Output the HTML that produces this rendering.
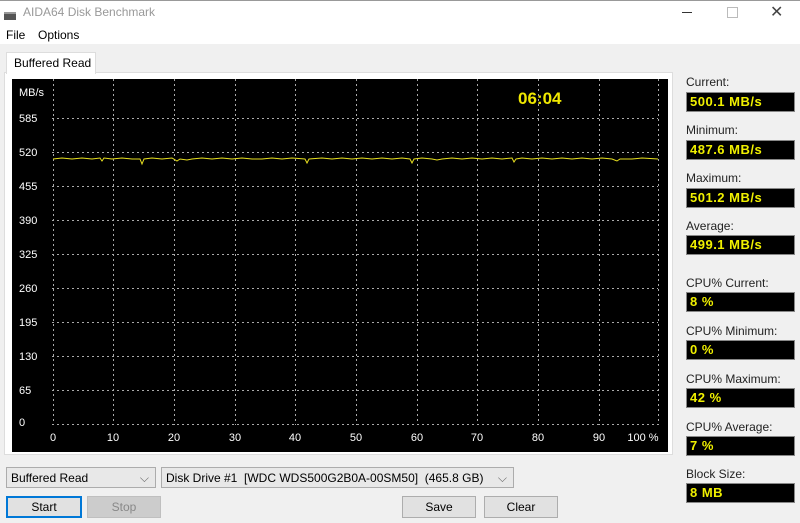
<!DOCTYPE html>
<html><head><style>
body{margin:0;width:800px;height:523px;background:#f0f0f0;font-family:"Liberation Sans",sans-serif;font-size:12px;color:#000;position:relative;overflow:hidden}
.a{position:absolute}
.lbl{position:absolute;left:686px;font-size:12px;color:#222}
.box{position:absolute;left:686px;width:104px;height:18px;background:#000;border:1px solid #888;color:#f0f000;font-weight:bold;font-size:13px;line-height:18px;padding-left:3px;box-sizing:content-box;letter-spacing:0.5px}
.btn{position:absolute;height:20px;border:1px solid #adadad;background:#e1e1e1;text-align:center;line-height:20px;font-size:12px}
.sel{position:absolute;height:21px;border:1px solid #acacac;background:#e8e8e8;line-height:21px;font-size:12px;padding-left:4px;box-sizing:border-box}
</style></head><body>
<div class="a" style="left:0;top:0;width:800px;height:44px;background:#fff;border-top:1px solid #999;box-sizing:border-box"></div>
<div class="a" style="left:4px;top:12px;width:12px;height:6px;background:#555;border-top:2px solid #999"></div>
<div class="a" style="left:23px;top:5px;color:#999;font-size:12px">AIDA64 Disk Benchmark</div>
<div class="a" style="left:682px;top:12px;width:10px;height:1px;background:#333"></div>
<div class="a" style="left:727px;top:7px;width:9px;height:9px;border:1px solid #bbb"></div>
<div class="a" style="left:770px;top:2px;font-size:16px;color:#444">✕</div>
<div class="a" style="left:6px;top:28px">File</div>
<div class="a" style="left:38px;top:28px">Options</div>
<div class="a" style="left:4px;top:72px;width:669px;height:383px;background:#fff;border:1px solid #ddd;box-sizing:border-box"></div>
<div class="a" style="left:6px;top:52px;width:88px;height:21px;background:#fff;border:1px solid #ddd;border-bottom:none"></div>
<div class="a" style="left:14px;top:56px">Buffered Read</div>
<svg class="a" style="left:12px;top:79px" width="656" height="373">
<rect width="656" height="373" fill="#000"/>
<g stroke="#aaa" stroke-dasharray="2,3" stroke-width="1">
<line x1="40" x2="646" y1="39.5" y2="39.5"/><line x1="40" x2="646" y1="73.5" y2="73.5"/><line x1="40" x2="646" y1="107.5" y2="107.5"/><line x1="40" x2="646" y1="141.5" y2="141.5"/><line x1="40" x2="646" y1="175.5" y2="175.5"/><line x1="40" x2="646" y1="209.5" y2="209.5"/><line x1="40" x2="646" y1="243.5" y2="243.5"/><line x1="40" x2="646" y1="277.5" y2="277.5"/><line x1="40" x2="646" y1="311.5" y2="311.5"/><line x1="40" x2="646" y1="345.5" y2="345.5"/>
<line y1="0" y2="346" x1="41.5" x2="41.5"/><line y1="0" y2="346" x1="101.5" x2="101.5"/><line y1="0" y2="346" x1="162.5" x2="162.5"/><line y1="0" y2="346" x1="223.5" x2="223.5"/><line y1="0" y2="346" x1="283.5" x2="283.5"/><line y1="0" y2="346" x1="344.5" x2="344.5"/><line y1="0" y2="346" x1="405.5" x2="405.5"/><line y1="0" y2="346" x1="465.5" x2="465.5"/><line y1="0" y2="346" x1="526.5" x2="526.5"/><line y1="0" y2="346" x1="587.5" x2="587.5"/><line y1="0" y2="346" x1="646.5" x2="646.5"/>
</g>
<polyline fill="none" stroke="#e8e020" stroke-width="1" points="41,80 50,79 60,80 70,79 80,80 88,79 90,82 92,79 100,80 110,79 120,80 128,80 130,85 132,80 140,79 150,80 160,79 165,82 168,80 175,81 180,80 190,79 200,80 210,79 220,80 230,79 240,80 250,80 260,79 270,80 280,79 293,80 295,84 297,80 310,79 320,80 330,79 340,80 350,79 360,80 370,79 380,80 390,79 398,80 400,84 402,80 410,79 420,80 425,81 430,80 440,79 450,80 460,79 470,80 480,79 490,80 500,79 502,83 504,80 510,79 520,80 530,79 540,80 550,79 560,80 570,79 580,80 590,79 600,80 605,82 608,80 620,80 630,79 646,80"/>
<g fill="#fff" font-family="Liberation Sans" font-size="11">
<text x="7" y="17">MB/s</text><text x="7" y="43">585</text><text x="7" y="77">520</text><text x="7" y="111">455</text><text x="7" y="145">390</text><text x="7" y="179">325</text><text x="7" y="213">260</text><text x="7" y="247">195</text><text x="7" y="281">130</text><text x="7" y="315">65</text><text x="7" y="347">0</text>
<g text-anchor="middle"><text x="41" y="362">0</text><text x="101" y="362">10</text><text x="162" y="362">20</text><text x="223" y="362">30</text><text x="283" y="362">40</text><text x="344" y="362">50</text><text x="405" y="362">60</text><text x="465" y="362">70</text><text x="526" y="362">80</text><text x="587" y="362">90</text><text x="631" y="362">100 %</text></g>
</g>
<text x="506" y="25" fill="#f0e800" font-family="Liberation Sans" font-weight="bold" font-size="17">06:04</text>
</svg>
<div class="lbl" style="top:75px">Current:</div><div class="box" style="top:92px">500.1 MB/s</div>
<div class="lbl" style="top:123px">Minimum:</div><div class="box" style="top:140px">487.6 MB/s</div>
<div class="lbl" style="top:171px">Maximum:</div><div class="box" style="top:188px">501.2 MB/s</div>
<div class="lbl" style="top:219px">Average:</div><div class="box" style="top:235px">499.1 MB/s</div>
<div class="lbl" style="top:276px">CPU% Current:</div><div class="box" style="top:292px">8 %</div>
<div class="lbl" style="top:324px">CPU% Minimum:</div><div class="box" style="top:340px">0 %</div>
<div class="lbl" style="top:372px">CPU% Maximum:</div><div class="box" style="top:388px">42 %</div>
<div class="lbl" style="top:420px">CPU% Average:</div><div class="box" style="top:436px">7 %</div>
<div class="lbl" style="top:467px">Block Size:</div><div class="box" style="top:483px">8 MB</div>
<div class="sel" style="left:6px;top:467px;width:150px">Buffered Read<span style="position:absolute;right:6px;color:#666">⌵</span></div>
<div class="sel" style="left:161px;top:467px;width:353px">Disk Drive #1&nbsp; [WDC WDS500G2B0A-00SM50]&nbsp; (465.8 GB)<span style="position:absolute;right:6px;color:#666">⌵</span></div>
<div class="btn" style="left:6px;top:496px;width:72px;border:2px solid #0078d7;height:18px;line-height:18px">Start</div>
<div class="btn" style="left:87px;top:496px;width:72px;background:#ccc;border-color:#bfbfbf;color:#888">Stop</div>
<div class="btn" style="left:402px;top:496px;width:72px">Save</div>
<div class="btn" style="left:484px;top:496px;width:72px">Clear</div>
</body></html>
